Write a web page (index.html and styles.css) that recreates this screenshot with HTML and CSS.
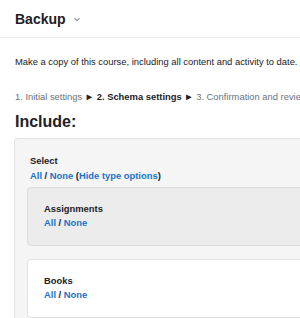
FILE: index.html
```html
<!DOCTYPE html>
<html lang="en">
  <head>
    <meta charset="UTF-8" />
    <meta name="viewport" content="width=device-width, initial-scale=1.0" />
    <title>Backup</title>
    <link rel="stylesheet" href="styles.css">
  </head>
  <body>
    <div class="page">
      <!-- Page header -->
      <header class="page-header">
        <h1>Backup</h1>
        <svg class="caret" width="8" height="5" viewBox="0 0 8 5">
          <path d="M1.5 1.2 L4 3.7 L6.5 1.2" fill="none" stroke="#8a9096" stroke-width="1.1" />
        </svg>
      </header>

      <div class="content">
        <p class="intro">Make a copy of this course, including all content and activity to date.</p>

        <!-- Progress steps -->
        <div class="steps">
          <span>1. Initial settings</span>
          <span class="arrow">&#9658;</span>
          <span class="current">2. Schema settings</span>
          <span class="arrow">&#9658;</span>
          <span>3. Confirmation and review</span>
        </div>

        <h2>Include:</h2>

        <div class="include-box">
          <div class="select-label">Select</div>
          <div class="links">
            <a href="#">All</a> / <a href="#">None</a>
            (<a href="#">Hide type options</a>)
          </div>

          <div class="type-box active">
            <div class="type-name">Assignments</div>
            <div class="links"><a href="#">All</a> / <a href="#">None</a></div>
          </div>

          <div class="type-box">
            <div class="type-name">Books</div>
            <div class="links"><a href="#">All</a> / <a href="#">None</a></div>
          </div>
        </div>
      </div>
    </div>
  </body>
</html>
```

FILE: styles.css
```css
html,
body {
  overflow: hidden;
}

body {
  margin: 0;
  font-family: "Liberation Sans", Arial, sans-serif;
  color: #1d2125;
  background-color: #fff;
}

.page {
  width: 420px;
}

.page-header {
  display: flex;
  align-items: center;
  gap: 7px;
  height: 37px;
  padding: 0 15px;
  border-bottom: 1px solid #ececec;
}

.page-header h1 {
  margin: 0;
  font-size: 14px;
  font-weight: bold;
}

.caret {
  margin-top: 2px;
}

.content {
  padding: 0 14px 0 15px;
}

.intro {
  margin: 17px 0 0;
  font-size: 9.4px;
  line-height: 14px;
}

.steps {
  margin-top: 21px;
  font-size: 9.4px;
  line-height: 14px;
  color: #6a737b;
  white-space: nowrap;
}

.steps .current {
  font-weight: bold;
  color: #1d2125;
}

.steps .arrow {
  color: #1d2125;
}

h2 {
  margin: 8px 0 6px;
  font-size: 16px;
  line-height: 20px;
  font-weight: bold;
}

.include-box {
  margin-left: -1px;
  padding: 15px 13px 0 15px;
  background-color: #f5f5f5;
  border: 1px solid #e3e3e3;
  border-radius: 4px;
  min-height: 200px;
}

.select-label,
.type-name {
  font-size: 9.4px;
  font-weight: bold;
  line-height: 14px;
}

.links {
  font-size: 9.4px;
  font-weight: bold;
  line-height: 14px;
  color: #1d2125;
}

.include-box > .links {
  margin-top: 1px;
}

.links a {
  color: #1a73c7;
  text-decoration: none;
}

.type-box {
  margin: 13px 0 0 -3px;
  padding: 14px 16px 15px;
  background-color: #fff;
  border: 1px solid #e3e3e3;
  border-radius: 4px;
}

.type-box.active {
  margin-top: 4px;
  background-color: #ececec;
  border-color: #dcdcdc;
}
```
